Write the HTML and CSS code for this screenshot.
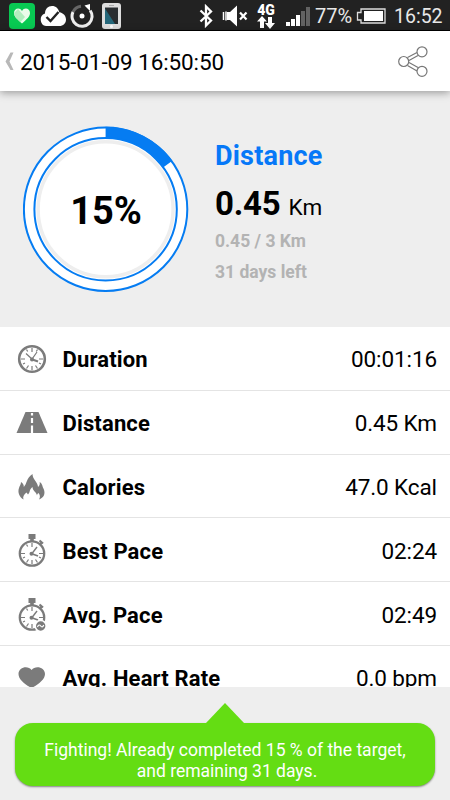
FILE: index.html
```html
<!DOCTYPE html>
<html lang="en">
<head>
    <meta charset="utf-8">
    <meta name="viewport" content="width=device-width, initial-scale=1">
    <title>Workout summary</title>
    <link rel="stylesheet" href="styles.css">
</head>
<body>
    <div class="status-bar">
        <div class="status-left">
            <svg width="26" height="26" viewBox="0 0 26 26">
                <rect width="26" height="26" rx="4" fill="#08c952"/>
                <path d="M13 20.500C8 16 5 13.500 5 10c0-5 6-6 8-2 2-4 8-3 8 2 0 3.500-3 6-8 10.500z" fill="#eafbea"/>
                <path d="M5.200 10 9 6l7 8-4.500 5C8 16 5 13.500 5.200 10z" fill="#b2edbf"/>
            </svg>
            <svg class="cloud" width="27" height="22" viewBox="0 0 27 22">
                <path d="M7 21a6.500 6.500 0 0 1-1-12.500C6 4 9 1 13 1c4 0 6.500 2.500 7.300 6.300C24.500 8 27 11 27 14.500c0 4-3 6.500-6.500 6.500z" fill="#fff"/>
                <path d="m7.500 12 4 4 8-9" fill="none" stroke="#222" stroke-width="2.400"/>
            </svg>
            <svg class="sync" width="24" height="24" viewBox="0 0 24 24">
                <path d="M3 8A10 10 0 0 1 11 2.200" fill="none" stroke="#666" stroke-width="3"/>
                <path d="M20.200 6.500A10 10 0 1 1 3 8" fill="none" stroke="#eee" stroke-width="3"/>
                <path d="M14.500 1.500 20 0v7z" fill="#fff"/>
                <circle cx="12" cy="12" r="2.500" fill="#fff"/>
            </svg>
            <svg class="phone" width="19" height="26" viewBox="0 0 19 26">
                <rect width="19" height="26" rx="3" fill="#ddd"/>
                <path d="M3 4.500h13V21H3z" fill="#292d30"/>
                <path d="M3 5.500 13 21H3z" fill="#24677a"/>
                <path d="M7 2.500h5" stroke="#aaa"/>
                <circle cx="9.500" cy="23.500" r="1.500" fill="#fff"/>
            </svg>
        </div>
        <div class="status-right">
            <svg width="14" height="24" viewBox="0 0 14 24">
                <path d="m1.500 6.500 10.500 10-5 5v-19l5 5-10.500 10" fill="none" stroke="#fff" stroke-width="2.300"/>
            </svg>
            <svg class="mute" width="26" height="22" viewBox="0 0 26 22">
                <path d="M1.500 7v8M4 6.500v9" stroke="#fff" stroke-width="1.500"/>
                <path d="M5 7h3l7-6.500v21L8 15H5z" fill="#fff"/>
                <path d="m18 7.500 6.500 7m0-7-6.500 7" stroke="#fff" stroke-width="2.200"/>
            </svg>
            <div class="network">
                <span class="network-type">4G</span>
                <svg width="18" height="13" viewBox="0 0 18 13">
                    <path d="m5 0 5 5.500H7V12H3V5.500H0zM11 1h4v6h3l-5 6-5-6h3z" fill="#fff"/>
                </svg>
            </div>
            <svg class="signal" width="25" height="20" viewBox="0 0 25 20">
                <path d="M0 16h4v4H0zM5 13h4v7H5zM10 9h4v11h-4z" fill="#fff"/>
                <path d="M15 5h4v15h-4zM20 1h4v19h-4z" fill="#626262"/>
            </svg>
            <span class="battery-level">77%</span>
            <svg class="battery" width="30" height="16" viewBox="0 0 30 16">
                <path d="M5 1h24v14H5v-3H1.500V4.500H5z" fill="none" stroke="#ddd" stroke-width="1.300"/>
                <path d="M8 3h19v10H8z" fill="#fff"/>
            </svg>
            <span class="clock">16:52</span>
        </div>
    </div>

    <header class="header">
        <svg class="back" width="9" height="19" viewBox="0 0 9 19">
            <path d="M5.500.5h3L4.500 9.500l4 8.500h-3L.5 9.500z" fill="#b8b8b8"/>
        </svg>
        <h1 class="header-title">2015-01-09 16:50:50</h1>
        <svg class="share" width="30" height="31" viewBox="0 0 30 31">
            <g fill="none" stroke="#777" stroke-width="1.200">
                <path d="m9.500 11.500 9.500-5M11 14.500l9-5M9.500 19.500l9.500 5.500M11 16.500l9 5"/>
                <circle cx="5.700" cy="15.500" r="5" fill="#fff"/>
                <circle cx="24" cy="5.800" r="5" fill="#fff"/>
                <circle cx="24" cy="25.300" r="5" fill="#fff"/>
            </g>
        </svg>
    </header>

    <section class="summary">
        <div class="progress">
            <svg class="progress-ring" width="166" height="166" viewBox="0 0 166 166">
                <circle cx="82.600" cy="83.300" r="81.700" fill="#fff" stroke="#057cf2" stroke-width="2"/>
                <path d="M82.600 6.300A77 77 0 0 1 144.900 38.040" fill="none" stroke="#057cf2" stroke-width="11"/>
                <circle cx="82.600" cy="83.300" r="71.200" fill="#fff" stroke="#057cf2" stroke-width="2"/>
                <circle cx="82.600" cy="83.300" r="67.500" fill="none" stroke="#eee" stroke-width="3.500"/>
            </svg>
            <span class="progress-value">15%</span>
        </div>
        <div class="goal">
            <h2 class="goal-title">Distance</h2>
            <p class="goal-value"><b>0.45</b><span>Km</span></p>
            <p class="goal-note">0.45 / 3 Km</p>
            <p class="goal-note">31 days left</p>
        </div>
    </section>

    <ul class="stats">
        <li class="stat">
            <svg class="stat-icon" width="32" height="34" viewBox="0 0 32 34">
                <g fill="none" stroke="#7b7b7b">
                    <circle cx="16" cy="17" r="12.800" stroke-width="2.600"/>
                    <path d="M16 6v4M16 24v4M5 17h4M23 17h4M10.500 7.500l1.200 2M21.500 7.500l-1.200 2M10.500 26.500l2-3M21.500 26.500l-2-3M7 22l2-1M25 22l-2-1" stroke-width="1.200"/>
                    <path d="m10 11.500 6 5.500 5-7" stroke-width="1.200"/>
                    <path d="m15 17 7 2.500" stroke-width="2"/>
                </g>
                <circle cx="16" cy="17.500" r="2" fill="#7b7b7b"/>
            </svg>
            <span class="stat-name">Duration</span>
            <span class="stat-value">00:01:16</span>
        </li>
        <li class="stat">
            <svg class="stat-icon" width="32" height="34" viewBox="0 0 32 34">
                <path d="M9.500 6h13L31.500 27H.5z" fill="#7b7b7b"/>
                <path d="M16 7v2.500M16 12v5M16 19.500V27" stroke="#fff" stroke-width="2.200"/>
            </svg>
            <span class="stat-name">Distance</span>
            <span class="stat-value">0.45 Km</span>
        </li>
        <li class="stat">
            <svg class="stat-icon" width="32" height="34" viewBox="0 0 32 34">
                <path d="M7.500 29.500C3 27 1.500 22 3 18c.5-2 2-3.500 2-6 2 1 3 3 2.800 5 3.500-3.500 2-8.500 8.700-13 0 5.500 5.500 8 5.500 13 1.500-1 2-3 1.700-5 3 2 2.500 4.500 4 7 2 4.500 0 9-4.700 10.500 1.500-2.500 1-4.500-.5-6.500-1 .8-1.500 1.500-1.500 2.500-.5-3.500-4.500-4.500-4.500-8.500-3.500 2.500-2 5-4.500 7.500l-1.500-2C8 24.500 6.500 26.500 7.500 29.500z" fill="#7b7b7b"/>
            </svg>
            <span class="stat-name">Calories</span>
            <span class="stat-value">47.0 Kcal</span>
        </li>
        <li class="stat">
            <svg class="stat-icon" width="32" height="34" viewBox="0 0 32 34">
                <path d="M12.500 0h7v5h-7zM14.200 4h3.600v4h-3.600z" fill="#7b7b7b"/>
                <g fill="none" stroke="#7b7b7b">
                    <circle cx="16" cy="19.500" r="12.200" stroke-width="2.300"/>
                    <path d="m23.500 11 2.500-3" stroke-width="2"/>
                    <path d="m23.500 6.500 3.500 3" stroke-width="2.200"/>
                    <path d="M16 9v4M16 26v4M5 19.500h4M23 19.500h4M10.500 10.500l1.200 2M10.500 28.500l2-3M21.500 28.500l-2-3M7 24l2-1M25 24l-2-1" stroke-width="1.200"/>
                    <path d="m16 19.500 5-6.500" stroke-width="1.400"/>
                    <path d="m15 19.500 7 2.500" stroke-width="1.800"/>
                </g>
                <circle cx="15.500" cy="19.700" r="2" fill="#7b7b7b"/>
            </svg>
            <span class="stat-name">Best Pace</span>
            <span class="stat-value">02:24</span>
        </li>
        <li class="stat">
            <svg class="stat-icon" width="32" height="34" viewBox="0 0 32 34">
                <path d="M12.500 0h7v5h-7zM14.200 4h3.600v4h-3.600z" fill="#7b7b7b"/>
                <g fill="none" stroke="#7b7b7b">
                    <circle cx="16" cy="19.500" r="12.200" stroke-width="2.300"/>
                    <path d="m23.500 11 2.500-3" stroke-width="2"/>
                    <path d="m23.500 6.500 3.500 3" stroke-width="2.200"/>
                    <path d="M16 9v4M16 26v4M5 19.500h4M23 19.500h4M10.500 10.500l1.200 2M10.500 28.500l2-3M7 24l2-1" stroke-width="1.200"/>
                    <path d="m16 19.500 5-6.500" stroke-width="1.400"/>
                    <path d="m15 19.500 7 2.500" stroke-width="1.800"/>
                </g>
                <circle cx="15.500" cy="19.700" r="2" fill="#7b7b7b"/>
                <circle cx="24.700" cy="28" r="5.500" fill="#7b7b7b" stroke="#fff" stroke-width="1.600"/>
                <path d="M21.500 29c1-3 2.500-2 3.200-1s2.300 1.500 3-1" fill="none" stroke="#fff" stroke-width="1.200"/>
            </svg>
            <span class="stat-name">Avg. Pace</span>
            <span class="stat-value">02:49</span>
        </li>
        <li class="stat">
            <svg class="stat-icon" width="32" height="34" viewBox="0 0 32 34">
                <path d="M15.600 27C9 23.500 2.500 18.500 2.500 13c0-7 9.500-9 13.100-4 3.600-5 13.400-3 13.400 4 0 5.500-6.800 10.500-13.400 14z" fill="#7b7b7b"/>
            </svg>
            <span class="stat-name">Avg. Heart Rate</span>
            <span class="stat-value">0.0 bpm</span>
        </li>
    </ul>

    <footer class="footer">
        <div class="tip-arrow"></div>
        <p class="tip"><span class="tip-top">Fighting! Already completed 15 % of the target,</span><span class="tip-bottom">and remaining 31 days.</span></p>
    </footer>
</body>
</html>
```

FILE: styles.css
```css
* {
    margin: 0;
    padding: 0;
    box-sizing: border-box;
}

body {
    height: 800px;
    display: flex;
    flex-direction: column;
    overflow: hidden;
    background: #eee;
    color: #000;
    font-family: Roboto, sans-serif;
    white-space: nowrap;
}

svg {
    display: block;
    flex: none;
}

.status-bar {
    flex: none;
    height: 31px;
    padding: 0 8px 0 9px;
    display: flex;
    justify-content: space-between;
    background: #222;
    border-bottom: 1px solid #000;
    color: #e8e8e8;
}

.status-left,
.status-right {
    display: flex;
    align-items: center;
    padding-top: 2px;
}

.cloud {
    margin-left: 4px;
}

.sync {
    margin-left: 4px;
}

.phone {
    margin-left: 8px;
}

.mute {
    margin-left: 9px;
}

.network {
    width: 18px;
    margin-left: 9px;
}

.network-type {
    display: block;
    height: 12px;
    line-height: 12px;
    font-size: 14px;
    font-weight: 900;
    text-align: center;
    color: #fff;
}

.signal {
    margin-left: 11px;
}

.battery-level {
    width: 37px;
    margin-left: 4px;
    font-size: 20px;
}

.battery {
    margin-left: 4px;
}

.clock {
    width: 48px;
    margin-left: 8px;
    font-size: 19.5px;
}

.header {
    position: relative;
    flex: none;
    height: 60px;
    padding: 0 22px 0 5px;
    display: flex;
    align-items: center;
    background: #fff;
    box-shadow: 0 2px 8px rgba(0, 0, 0, 0.35);
}

.header-title {
    flex: 1;
    padding-top: 2px;
    margin-left: 6px;
    font-size: 22.5px;
    font-weight: 400;
    letter-spacing: -0.1px;
}

.summary {
    flex: none;
    height: 236px;
    padding: 35px 0 0 23px;
    display: flex;
}

.progress {
    width: 166px;
    height: 166px;
    display: grid;
    place-items: center;
}

.progress-ring,
.progress-value {
    grid-area: 1 / 1;
}

.progress-value {
    padding-top: 3px;
    font-size: 38px;
    font-weight: 700;
}

.goal {
    margin-left: 26px;
    padding-top: 14px;
}

.goal-title {
    height: 32px;
    line-height: 32px;
    font-size: 27px;
    font-weight: 700;
    letter-spacing: 0.2px;
    color: #0678f8;
}

.goal-value {
    height: 45px;
    margin-top: 9px;
    line-height: 46px;
}

.goal-value b {
    font-size: 33px;
    letter-spacing: -0.2px;
}

.goal-value span {
    margin-left: 8px;
    font-size: 22.5px;
}

.goal-note {
    height: 31px;
    line-height: 30px;
    font-size: 17.5px;
    font-weight: 700;
    color: #b3b3b3;
}

.stats {
    flex: none;
    height: 360px;
    overflow: hidden;
    background: #fff;
    list-style: none;
}

.stat {
    height: 63.8px;
    padding: 1px 13px 0 15.5px;
    display: flex;
    align-items: center;
    border-bottom: 1px solid #e4e4e4;
}

.stat-icon {
    margin-top: 1px;
}

.stat-name {
    flex: 1;
    margin-left: 15px;
    padding-top: 2px;
    font-size: 22px;
    font-weight: 700;
    letter-spacing: 0.15px;
}

.stat-value {
    padding-top: 1px;
    font-size: 22.5px;
    letter-spacing: -0.1px;
}

.footer {
    flex: 1;
    padding: 16px 15px 14px;
}

.tip-arrow {
    width: 38px;
    height: 20px;
    margin: 0 auto;
    background: #64dd13;
    clip-path: polygon(50% 0, 100% 100%, 0 100%);
}

.tip {
    height: 63px;
    padding-top: 17px;
    border-radius: 18px;
    background: #64dd13;
    box-shadow: 0 1px 2px rgba(0, 0, 0, 0.45);
    color: #fff;
    font-size: 17.5px;
    line-height: 20.5px;
    text-align: center;
}

.tip span {
    display: block;
}

.tip-bottom {
    padding-left: 4px;
}
```
